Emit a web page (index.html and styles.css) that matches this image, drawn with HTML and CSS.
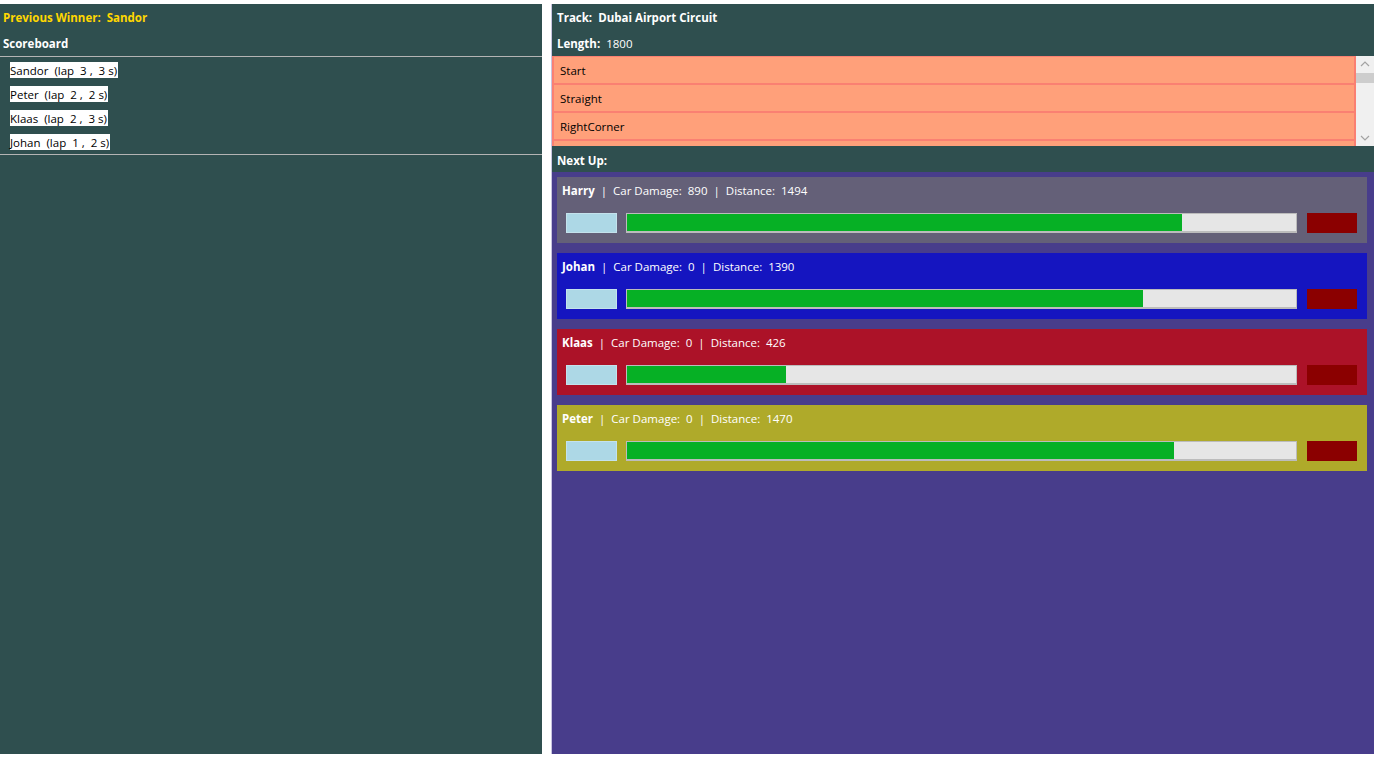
FILE: index.html
```html
<!DOCTYPE html>
<html>
<head>
<meta charset="utf-8">
<link rel="stylesheet" href="styles.css">
</head>
<body>
<div class="app">
  <section class="left">
    <div class="hdr winner"><b>Previous Winner:</b><b class="sp">Sandor</b></div>
    <div class="hdr"><b>Scoreboard</b></div>
    <ul class="scores">
      <li><span>Sandor  (lap  3 ,  3 s)</span></li>
      <li><span>Peter  (lap  2 ,  2 s)</span></li>
      <li><span>Klaas  (lap  2 ,  3 s)</span></li>
      <li><span>Johan  (lap  1 ,  2 s)</span></li>
    </ul>
  </section>
  <div class="divider"></div>
  <section class="right">
    <div class="hdr"><b>Track:</b><b class="sp">Dubai Airport Circuit</b></div>
    <div class="hdr"><b>Length:</b><span class="sp">1800</span></div>
    <div class="track">
      <div class="sections">
        <div class="sec">Start</div>
        <div class="sec">Straight</div>
        <div class="sec">RightCorner</div>
        <div class="sec"></div>
      </div>
      <div class="scrollbar">
        <svg class="arr" width="18" height="16" viewBox="0 0 18 16"><path d="M5 10 L9 6 L13 10" fill="none" stroke="#a3a3a3" stroke-width="1.2"/></svg>
        <div class="thumb"></div>
        <div class="track-fill"></div>
        <svg class="arr" width="18" height="16" viewBox="0 0 18 16"><path d="M5 6 L9 10 L13 6" fill="none" stroke="#a3a3a3" stroke-width="1.2"/></svg>
      </div>
    </div>
    <div class="hdr next"><b>Next Up:</b></div>
    <div class="cars">
      <div class="car harry">
        <div class="info"><b>Harry</b><span>  |  Car Damage:  890  |  Distance:  1494</span></div>
        <div class="bars"><div class="lb"></div><div class="prog"><div class="fill" style="width:83%"></div></div><div class="dr"></div></div>
      </div>
      <div class="car johan">
        <div class="info"><b>Johan</b><span>  |  Car Damage:  0  |  Distance:  1390</span></div>
        <div class="bars"><div class="lb"></div><div class="prog"><div class="fill" style="width:77.2%"></div></div><div class="dr"></div></div>
      </div>
      <div class="car klaas">
        <div class="info"><b>Klaas</b><span>  |  Car Damage:  0  |  Distance:  426</span></div>
        <div class="bars"><div class="lb"></div><div class="prog"><div class="fill" style="width:23.7%"></div></div><div class="dr"></div></div>
      </div>
      <div class="car peter">
        <div class="info"><b>Peter</b><span>  |  Car Damage:  0  |  Distance:  1470</span></div>
        <div class="bars"><div class="lb"></div><div class="prog"><div class="fill" style="width:81.7%"></div></div><div class="dr"></div></div>
      </div>
    </div>
  </section>
</div>
</body>
</html>
```
FILE: styles.css
```css
* { box-sizing: border-box; }
html, body { margin: 0; padding: 0; background: #fff; }
body {
  font-family: "Open Sans", "Noto Sans", sans-serif;
  font-size: 11.5px;
  color: #fff;
  width: 1374px;
  height: 757px;
  overflow: hidden;
}
.app {
  display: flex;
  height: 750px;
  margin-top: 4px;
}
.left {
  width: 542px;
  background: #2f4f4f;
  display: flex;
  flex-direction: column;
}
.divider {
  width: 10px;
  background: #fff;
  border-right: 1px solid #c8c4e0;
}
.right {
  flex: 1;
  background: #2f4f4f;
  display: flex;
  flex-direction: column;
}
.hdr {
  height: 26px;
  line-height: 24px;
  padding: 2px 0 0 3px;
  white-space: pre;
}
.right .hdr { padding-left: 5px; }
.hdr.next { padding-top: 3px; }
.hdr b { font-weight: 700; }
.sp { margin-left: 6px; }
.winner { color: #ffd700; }
.scores {
  list-style: none;
  margin: 0;
  padding: 5px 0 4px 10px;
  border-top: 1px solid #b4b4b4;
  border-bottom: 1px solid #b4b4b4;
  display: flex;
  flex-direction: column;
  gap: 8px;
}
.scores li { height: 16px; }
.scores span {
  background: #fff;
  color: #000;
  white-space: pre;
  display: inline-block;
  height: 16px;
  line-height: 16px;
  padding: 1px 1px 0 0;
}
.track {
  height: 90px;
  display: flex;
  overflow: hidden;
}
.sections {
  flex: 1;
  background: #fa8072;
  padding: 1px 2px 0 2px;
  overflow: hidden;
  color: #000;
}
.sec {
  height: 26px;
  line-height: 22px;
  padding: 3px 0 0 6px;
  background: #ffa07a;
  margin-bottom: 2px;
}
.scrollbar {
  width: 18px;
  background: #f0f0f0;
  display: flex;
  flex-direction: column;
}
.arr { display: block; flex: none; }
.thumb { height: 10px; background: #cdcdcd; margin-top: 1px; flex: none; }
.track-fill { flex: 1; }
.cars {
  flex: 1;
  background: #483d8b;
  padding: 5px 5px 0 5px;
  display: flex;
  flex-direction: column;
  gap: 10px;
}
.car {
  width: 810px;
  height: 66px;
  padding: 0 10px 0 9px;
}
.harry { background: #646078; }
.johan { background: #1515c0; }
.klaas { background: #ac1228; }
.peter { background: #afaa2a; }
.info {
  height: 26px;
  line-height: 28px;
  margin-left: -4px;
  white-space: pre;
}
.info b { font-weight: 700; }
.bars {
  margin-top: 10px;
  display: flex;
  height: 20px;
}
.lb {
  width: 51px;
  background: #add8e6;
  border: 1px solid #c4e2ec;
}
.prog {
  flex: 1;
  margin: 0 10px 0 9px;
  background: #e6e6e6;
  border: 1px solid #bcbcbc;
  border-bottom-width: 2px;
}
.fill { height: 100%; background: #06b025; }
.dr { width: 50px; background: #8b0000; }
```
